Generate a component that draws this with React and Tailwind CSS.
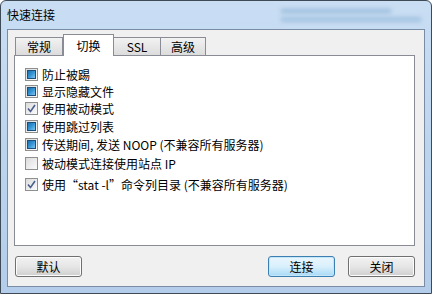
// Win7 "快速连接" dialog, 切换 tab selected.
const FONT = { fontFamily: '"Noto Sans CJK SC", "Noto Sans", sans-serif' };

const OPTIONS = [
  { label: '防止被踢', state: 'filled', h: 'h-[17px]' },
  { label: '显示隐藏文件', state: 'filled', h: 'h-[17px]' },
  { label: '使用被动模式', state: 'checked', h: 'h-[18px]' },
  { label: '使用跳过列表', state: 'filled', h: 'h-[18px]' },
  { label: '传送期间, 发送 NOOP (不兼容所有服务器)', state: 'filled', h: 'h-[19px]' },
  { label: '被动模式连接使用站点 IP', state: 'empty', h: 'h-[21px]' },
  { label: '使用“stat -l”命令列目录 (不兼容所有服务器)', state: 'checked', h: 'h-[20px]' },
];

function Box({ state }) {
  return (
    <span className="flex h-[13px] w-[13px] shrink-0 items-center justify-center border border-[#8e8f8f] bg-gradient-to-br from-[#dcdcdc] to-[#fbfbfb]">
      {state === 'filled' && (
        <span className="h-[9px] w-[9px] border border-[#1d4f7c] bg-gradient-to-br from-[#1b6fae] via-[#3596d6] to-[#7cc4ee]" />
      )}
      {state === 'checked' && (
        <svg width="9" height="9" viewBox="0 0 9 9">
          <path d="M1 4.5 L3.5 7.5 L8 1" fill="none" stroke="#4a5f8e" strokeWidth="1.6" />
        </svg>
      )}
    </span>
  );
}

function Btn({ children, primary }) {
  return (
    <button
      className={
        'flex h-[21px] w-[67px] items-center justify-center rounded-[3px] border text-[12px] text-black ' +
        (primary
          ? 'border-[#3c7fb1] bg-gradient-to-b from-[#eaf6fd] via-[#d9f0fc] to-[#a7d9f5] shadow-[inset_0_0_0_1px_#c5e6f9]'
          : 'border-[#707070] bg-gradient-to-b from-[#f2f2f2] via-[#e6e6e6] to-[#cfcfcf] shadow-[inset_0_0_0_1px_#fcfcfc]')
      }
    >
      {children}
    </button>
  );
}

function Tab({ label, active, w }) {
  return active ? (
    <div className={`relative z-10 -mb-px flex h-[22px] ${w} items-start justify-center border border-b-0 border-[#898c95] bg-white pt-[2px] text-[12px]`}>
      {label}
    </div>
  ) : (
    <div className={`flex h-[18px] ${w} items-center justify-center border border-b-0 border-[#898c95] bg-gradient-to-b from-[#f2f2f2] to-[#dcdcdc] text-[12px] -ml-px first:ml-0`}>
      {label}
    </div>
  );
}

export default function App() {
  return (
    <div style={FONT} className="h-[294px] w-[432px] overflow-hidden rounded-t-[6px] border border-[#3f4a57] bg-gradient-to-b from-[#c9def3] via-[#bcd5ef] to-[#b3cdea]">
      <div className="flex h-[28px] items-center pl-[6px]">
        <span className="text-[12px] text-black">快速连接</span>
        <div className="ml-auto mr-[10px] flex flex-col gap-[4px] opacity-60 blur-[2px]">
          <div className="h-[4px] w-[110px] bg-[#7da6cc]" />
          <div className="h-[5px] w-[140px] bg-[#8cb2d6]" />
        </div>
      </div>
      <div className="ml-[6px] flex h-[258px] w-[418px] flex-col border border-[#7a8ca3] bg-[#f0f0f0] pl-[6px] pt-[4px]">
        <div className="flex items-end pl-[1px]">
          <Tab label="常规" w="w-[48px]" />
          <Tab label="切换" w="w-[51px]" active />
          <Tab label="SSL" w="w-[48px]" />
          <Tab label="高级" w="w-[46px]" />
        </div>
        <div className="flex h-[191px] w-[401px] flex-col border border-[#898c95] bg-white pl-[10px] pt-[12px]">
          {OPTIONS.map((o) => (
            <div key={o.label} className={`flex ${o.h} items-start gap-[4px]`}>
              <Box state={o.state} />
              <span className="text-[12px] leading-[13px] text-black">{o.label}</span>
            </div>
          ))}
        </div>
        <div className="mt-[10px] flex w-[401px] items-center pl-[1px]">
          <Btn>默认</Btn>
          <div className="ml-auto flex gap-[13px]">
            <Btn primary>连接</Btn>
            <Btn>关闭</Btn>
          </div>
        </div>
      </div>
    </div>
  );
}
